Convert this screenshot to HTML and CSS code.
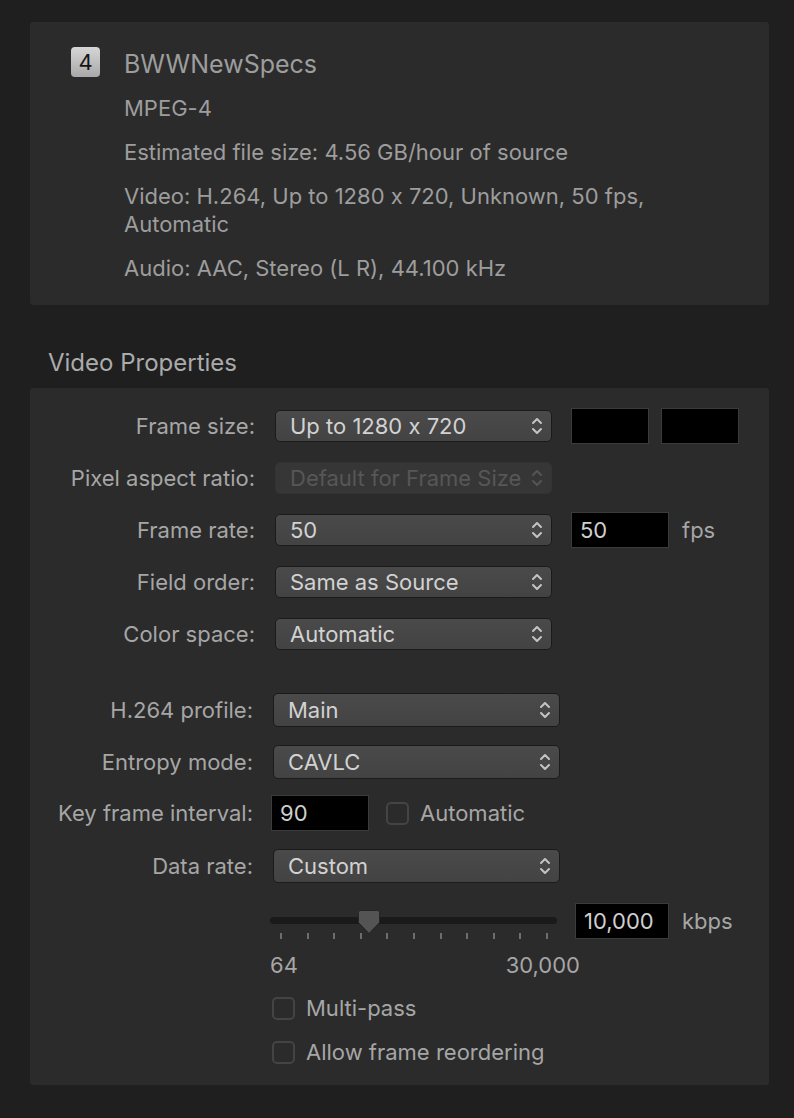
FILE: index.html
```html
<!DOCTYPE html>
<html>
<head>
<meta charset="utf-8">
<link rel="stylesheet" href="styles.css">
</head>
<body>
<div class="page">
  <section class="summary">
    <div class="badge">4</div>
    <div class="summary-text">
      <div class="title">BWWNewSpecs</div>
      <p>MPEG-4</p>
      <p>Estimated file size: 4.56 GB/hour of source</p>
      <p>Video: H.264, Up to 1280 x 720, Unknown, 50 fps,<br>Automatic</p>
      <p>Audio: AAC, Stereo (L R), 44.100 kHz</p>
    </div>
  </section>

  <h2 class="section-title">Video Properties</h2>

  <section class="props">
    <div class="row">
      <label class="lbl">Frame size:</label>
      <div class="popup"><span>Up to 1280 x 720</span><svg class="chev" viewBox="0 0 12 20"><path d="M2 7 L6 3 L10 7 M2 13 L6 17 L10 13"/></svg></div>
      <div class="field w78"></div>
      <div class="field w78"></div>
    </div>
    <div class="row">
      <label class="lbl">Pixel aspect ratio:</label>
      <div class="popup disabled"><span>Default for Frame Size</span><svg class="chev" viewBox="0 0 12 20"><path d="M2 7 L6 3 L10 7 M2 13 L6 17 L10 13"/></svg></div>
    </div>
    <div class="row">
      <label class="lbl">Frame rate:</label>
      <div class="popup"><span>50</span><svg class="chev" viewBox="0 0 12 20"><path d="M2 7 L6 3 L10 7 M2 13 L6 17 L10 13"/></svg></div>
      <div class="field w98">50</div>
      <span class="unit">fps</span>
    </div>
    <div class="row">
      <label class="lbl">Field order:</label>
      <div class="popup"><span>Same as Source</span><svg class="chev" viewBox="0 0 12 20"><path d="M2 7 L6 3 L10 7 M2 13 L6 17 L10 13"/></svg></div>
    </div>
    <div class="row">
      <label class="lbl">Color space:</label>
      <div class="popup"><span>Automatic</span><svg class="chev" viewBox="0 0 12 20"><path d="M2 7 L6 3 L10 7 M2 13 L6 17 L10 13"/></svg></div>
    </div>

    <div class="row g2 r-h264">
      <label class="lbl">H.264 profile:</label>
      <div class="popup wide"><span>Main</span><svg class="chev" viewBox="0 0 12 20"><path d="M2 7 L6 3 L10 7 M2 13 L6 17 L10 13"/></svg></div>
    </div>
    <div class="row g2 r-entropy">
      <label class="lbl">Entropy mode:</label>
      <div class="popup wide"><span>CAVLC</span><svg class="chev" viewBox="0 0 12 20"><path d="M2 7 L6 3 L10 7 M2 13 L6 17 L10 13"/></svg></div>
    </div>
    <div class="row g2 r-key">
      <label class="lbl">Key frame interval:</label>
      <div class="field key">90</div>
      <span class="check-wrap"><span class="checkbox"></span><span class="check-label">Automatic</span></span>
    </div>
    <div class="row g2 r-rate">
      <label class="lbl">Data rate:</label>
      <div class="popup wide"><span>Custom</span><svg class="chev" viewBox="0 0 12 20"><path d="M2 7 L6 3 L10 7 M2 13 L6 17 L10 13"/></svg></div>
    </div>
    <div class="row g2 slider-row">
      <div class="slider">
        <div class="track"></div>
        <svg class="knob" viewBox="0 0 24 26"><path d="M3.5 1.5 H20.5 Q22.5 1.5 22.5 3.5 V13.5 L12 24.5 L1.5 13.5 V3.5 Q1.5 1.5 3.5 1.5 Z"/></svg>
        <div class="ticks">
          <i></i><i></i><i></i><i></i><i></i><i></i><i></i><i></i><i></i><i></i><i></i>
        </div>
      </div>
      <div class="field rate">10,000</div>
      <span class="unit">kbps</span>
    </div>
    <div class="range-labels">
      <span>64</span><span>30,000</span>
    </div>
    <div class="check-row first-check">
      <span class="checkbox"></span><span class="check-label">Multi-pass</span>
    </div>
    <div class="check-row">
      <span class="checkbox"></span><span class="check-label">Allow frame reordering</span>
    </div>
  </section>
</div>
</body>
</html>
```

FILE: styles.css
```css
* { box-sizing: border-box; }
html, body {
  margin: 0;
  padding: 0;
  background: #1f1f1f;
}
body {
  font-family: Inter, "Liberation Sans", Arial, sans-serif;
  font-feature-settings: "calt" 0;
  font-size: 22px;
  color: #a6a6a6;
}
.page {
  width: 794px;
  height: 1118px;
  padding: 22px 25px 0 30px;
}
.summary {
  background: #2b2b2b;
  border-radius: 3px;
  height: 283px;
  padding: 25px 0 0 41px;
  display: flex;
  gap: 24px;
  align-items: flex-start;
}
.badge {
  width: 29px;
  height: 30px;
  border-radius: 4px;
  background: linear-gradient(#d6d6d6, #a9a9a9);
  color: #151515;
  font-size: 22px;
  line-height: 30px;
  text-align: center;
  flex: none;
}
.summary-text { color: #9d9d9d; }
.title {
  font-size: 25px;
  line-height: 34px;
  margin-bottom: 13px;
}
.summary-text p {
  margin: 0 0 16px 0;
  line-height: 28px;
}
.section-title {
  margin: 44px 0 11px 18px;
  font-weight: normal;
  font-size: 24px;
  line-height: 28px;
  color: #ababab;
}
.props {
  background: #2b2b2b;
  border-radius: 3px;
  height: 697px;
  padding-top: 20px;
  display: flex;
  flex-direction: column;
}
.row {
  display: flex;
  align-items: center;
  height: 36px;
  margin-bottom: 16px;
  flex: none;
}
.row.r-h264 { margin-top: 24px; }
.row.r-entropy { margin-bottom: 15px; }
.row.r-key { margin-bottom: 17px; }
.row.r-rate { margin-bottom: 19px; }
.lbl {
  width: 245px;
  flex: none;
  padding-right: 20px;
  text-align: right;
  white-space: nowrap;
}
.g2 .lbl { width: 243px; }
.popup {
  width: 277px;
  height: 32px;
  border: 1px solid #1b1b1b;
  border-radius: 5px;
  background: linear-gradient(#4a4a4a, #434343);
  color: #d2d2d2;
  display: flex;
  align-items: center;
  justify-content: space-between;
  padding: 0 8px 0 14px;
  white-space: nowrap;
  flex: none;
}
.popup.wide { width: 287px; height: 34px; }
.popup.disabled {
  background: #363636;
  border-color: #333;
  color: #575757;
  overflow: hidden;
}
.popup.disabled span { overflow: hidden; }
.chev {
  width: 12px;
  height: 20px;
  flex: none;
}
.chev path {
  fill: none;
  stroke: #c4c4c4;
  stroke-width: 2;
  stroke-linecap: round;
  stroke-linejoin: round;
}
.disabled .chev path { stroke: #555; }
.field {
  height: 36px;
  background: #000;
  border: 1px solid #3b3b3b;
  color: #cfcfcf;
  padding-left: 8px;
  line-height: 34px;
  flex: none;
  margin-left: 19px;
}
.w78 { width: 78px; }
.w78 + .w78 { margin-left: 12px; }
.w98 { width: 98px; }
.unit {
  margin-left: 13px;
  color: #a6a6a6;
}
.field.key {
  width: 98px;
  margin-left: -2px;
}
.check-wrap {
  display: flex;
  align-items: center;
  margin-left: 17px;
}
.checkbox {
  width: 23px;
  height: 23px;
  border: 2px solid #444;
  border-radius: 5px;
  flex: none;
}
.check-label { margin-left: 11px; }
.slider-row { margin-bottom: 12px; }
.slider {
  position: relative;
  width: 290px;
  height: 36px;
  margin-left: 240px;
  flex: none;
}
.track {
  position: absolute;
  left: 0;
  right: 3px;
  top: 14px;
  height: 7px;
  border-radius: 4px;
  background: #1a1a1a;
}
.knob {
  position: absolute;
  left: 87px;
  top: 6px;
  width: 24px;
  height: 26px;
}
.knob path {
  fill: #545454;
  stroke: #262626;
  stroke-width: 1;
}
.ticks {
  position: absolute;
  left: 10px;
  width: 268px;
  top: 30px;
  display: flex;
  justify-content: space-between;
}
.ticks i {
  display: block;
  width: 2px;
  height: 6px;
  background: #6e6e6e;
}
.field.rate {
  width: 94px;
  margin-left: 15px;
}
.range-labels {
  display: flex;
  margin-left: 240px;
  width: 310px;
  justify-content: space-between;
  line-height: 28px;
  height: 28px;
  flex: none;
}
.check-row {
  display: flex;
  align-items: center;
  height: 28px;
  margin-left: 242px;
  margin-bottom: 16px;
  flex: none;
}
.first-check { margin-top: 15px; }
```
